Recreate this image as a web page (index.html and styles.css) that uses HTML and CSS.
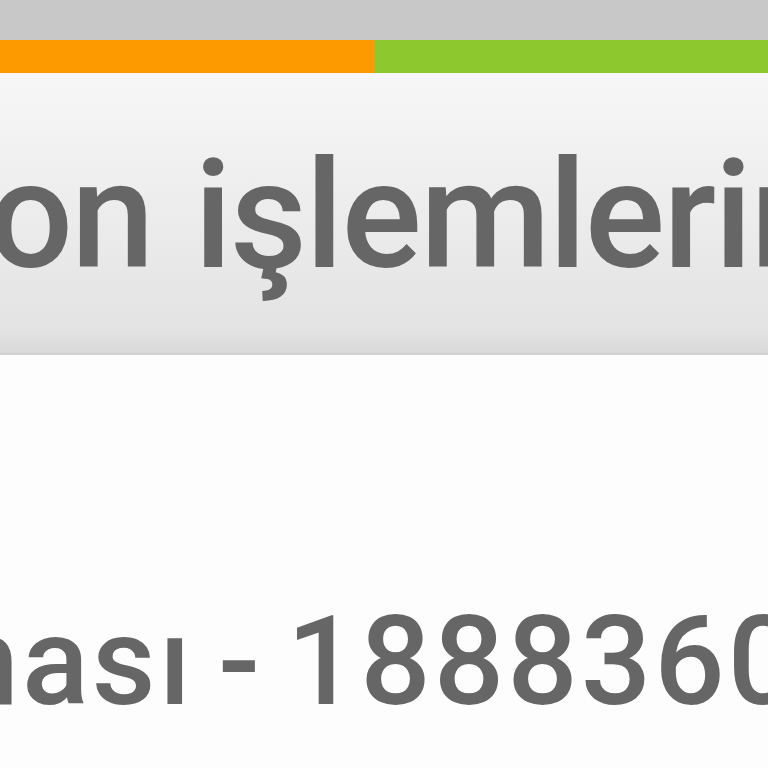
FILE: index.html
```html
<!DOCTYPE html>
<html lang="tr">
<head>
<meta charset="utf-8">
<title>Rezervasyon</title>
<link rel="stylesheet" href="styles.css">
</head>
<body>
<div class="topbar"></div>
<div class="stripe">
  <div class="stripe-orange"></div>
  <div class="stripe-green"></div>
</div>
<header class="header">
  <h1 class="title">on işlemlerin</h1>
</header>
<main class="content">
  <p class="number">ması - 1888360</p>
</main>
</body>
</html>
```
FILE: styles.css
```css
html, body {
  margin: 0;
  padding: 0;
  width: 768px;
  height: 768px;
  overflow: hidden;
  background: #fdfdfd;
  font-family: Roboto, "Open Sans", sans-serif;
}
.topbar {
  height: 40px;
  background: #c8c8c8;
}
.stripe {
  display: flex;
  height: 33px;
}
.stripe-orange {
  width: 375px;
  background: #fd9a00;
}
.stripe-green {
  flex: 1;
  background: #8cc82e;
}
.header {
  box-sizing: border-box;
  height: 282px;
  padding-top: 68px;
  background: linear-gradient(#f7f7f7, #e3e3e3 92%, #d9d9d9);
  border-bottom: 2px solid #d2d2d2;
  overflow: hidden;
}
.title {
  margin: 0 0 0 -12px;
  font-size: 150px;
  line-height: 150px;
  font-weight: 500;
  letter-spacing: -2px;
  word-spacing: 6px;
  color: #666666;
  white-space: nowrap;
}
.content {
  padding-top: 245px;
  overflow: hidden;
}
.number {
  margin: 0;
  text-indent: -89px;
  font-size: 124px;
  line-height: 124px;
  font-weight: 500;
  letter-spacing: 3px;
  word-spacing: -10px;
  color: #666666;
  white-space: nowrap;
}
```
